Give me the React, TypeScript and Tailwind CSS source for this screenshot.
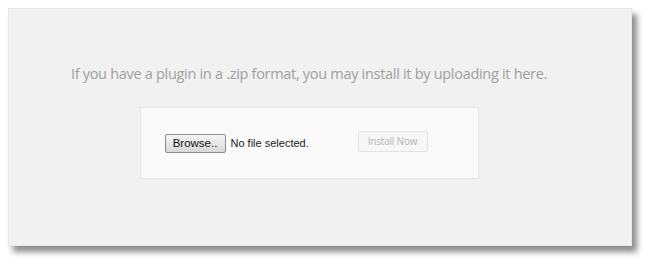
export default function App() {
  return (
    <div className="w-[650px] h-[266px] bg-white pt-[8px] pl-[8px]">
      <div className="w-[624px] h-[238px] bg-[#f1f1f1] border border-[#e8e8e8] shadow-[5px_6px_6px_rgba(0,0,0,0.45)] flex flex-col items-center pt-[55px]">
        <p className="font-['Open_Sans',sans-serif] text-[14.5px] tracking-[-0.3px] text-[#a0a0a0] leading-[20px] ml-[-22px]">
          If you have a plugin in a .zip format, you may install it by uploading it here.
        </p>
        <div className="mt-[23px] ml-[-22px] w-[339px] h-[72px] bg-[#fafafa] border border-[#e6e6e6] flex items-center pl-[24px]">
          <button className="h-[19px] w-[61px] border border-[#8d8d8d] rounded-[2px] bg-gradient-to-b from-[#f4f4f4] to-[#d8d8d8] font-['Liberation_Sans',sans-serif] text-[11.5px] leading-[16px] text-[#111]">
            Browse..
          </button>
          <span className="ml-[5px] w-[79px] font-['Liberation_Sans',sans-serif] text-[11px] text-[#222] whitespace-nowrap">No file selected.</span>
          <button className="ml-[48px] mb-[4px] h-[21px] w-[70px] border border-[#e2e2e2] rounded-[2px] bg-[#f7f7f7] font-['Open_Sans',sans-serif] text-[10px] tracking-[-0.2px] text-[#b4b4b4]">
            Install Now
          </button>
        </div>
      </div>
    </div>
  );
}
